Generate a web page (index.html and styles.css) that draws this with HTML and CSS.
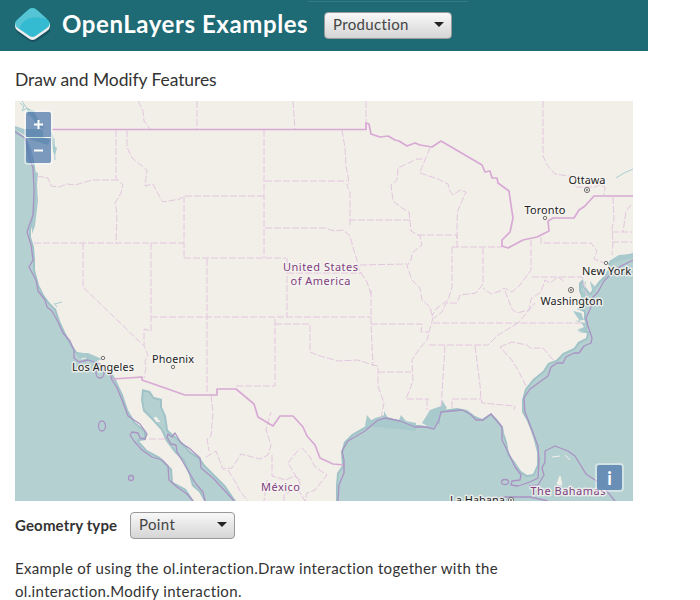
FILE: index.html
```html
<!DOCTYPE html>
<html lang="en">
<head>
<meta charset="utf-8">
<title>Draw and Modify Features</title>
<link rel="stylesheet" href="styles.css">
</head>
<body>
<header class="navbar">
  <svg class="logo" viewBox="0 0 36 38" width="36" height="38">
    <path d="M1 20Q0 24 3 26L13 33Q18 37 23 33L33 26Q36 24 35 20Z" fill="#17515d"/>
    <path d="M0 16V19Q0 22 3 24L13 31Q17.500 35 22 31L32 24Q35 22 35 19V16Z" fill="#eeeeee"/>
    <path d="M2 13L12 4Q17.500-2 23 4L33 13Q37 17 32 21L22 28Q17.500 32 13 28L3 21Q-2 17 2 13Z" fill="#34bbd1"/>
    <path d="M2 13L12 4Q17.500-2 23 4L32 12Q11 6 4 21L3 21Q-2 17 2 13Z" fill="#55c5d6"/>
  </svg>
  <span class="brand">OpenLayers Examples</span>
  <span class="picker picker-mode"><select><option>Production</option></select></span>
</header>
<main class="content">
  <h4 class="title">Draw and Modify Features</h4>
  <div class="map">
    <svg class="tiles" viewBox="15 101 618 400" width="618" height="400">
      <rect x="15" y="101" width="618" height="400" fill="#b5d0d0"/>
      <path class="land" d="M15 101H633V253L625 255 614 260 608 263 609 268 605 275 599 281 593 289 590 293 584 285 583 279 579 283 579 291 582 298 582 304 577 309 584 312 584 319 586 325 584 331 578 332 587 333 586 338 578 342 574 348 563 353 556 360 548 363 543 371 533 379 525 389 522 400 522 412 527 421 531 431 534 440 537 452 537 465 533 474 527 475 521 471 515 462 509 454 507 442 504 433 503 427 497 419 491 413 482 419 475 416 467 410 457 408 443 410 430 411 437 414 438 422 428 421 431 427 420 425 409 425 398 420 384 416 375 418 366 426 352 434 344 442 341 453 342 466 337 473 336 486 336 501H236L225 485 211 471 205 465 200 458 190 451 183 443 175 436 168 430 166 416 162 407 162 399 154 397 150 391 142 389 141 400 143 411 151 419 161 430 166 441 175 453 183 461 189 475 192 486 199 492 204 501H194L186 489 173 482 172 469 160 457 147 450 139 441 146 440 146 431 135 422 128 410 123 395 116 380 112 373 99 363 90 354 77 352 72 345 65 332 60 321 56 309 49 302 44 295 39 285 35 270 35 260 34 247 31 237 31 230 34 219 36 204 37 182 34 160 30 146 25 137 15 129Z"/>
      <g class="water">
        <path d="M33 129L43 130 43 137 50 140 48 145 32 140 15 129V126L24 129ZM51 131l2 5 1 10 3 2-2 7-2-3-1-8ZM28 108l6 4 8 14 4 3-7-2-11-14Z"/>
        <path d="M34 171l4 2-1 12 1 16-3 25-3 8v-9l3-16 1-25ZM586 281l-5 5 2 8 2-7ZM590 281l2 9 3 3 1-5ZM609 261l10-6 14-1v4l-23 5ZM583 307l-8-7 6 2 1-12 3-8 0 23ZM573 311l8 2 3 7-9 1 11 2-1 10-8-3 7-3M422 423l8-13 11-4 1-6 5 8-7 7-2 9-7 4ZM365 426l2-11 4 5 13-5v-4l4 7 11 2 2-5 5 6 10 2v8Z"/>
        <path d="M76 353l12 0 14 6-8 3-14-3Z"/>
      </g>
      <g class="rivers"><path d="M20 103l4 3-2 5 5-3 2 8 M22 101l6 9 7 1 M54 138l1 22 M55 304l7-2 M54 303l3 4 M616 178l8-5 9-4 M575 312l7 2"/></g>
      <g class="states">
        <path d="M138 101l5 10 1 10 7 9 M197 101v28 M293 101l2 28 M366 101v28 M543 101v55l4 9 8 9 20 3v10l20 0 4-2 6 2-1 8"/>
        <path d="M37 176l11 2 3 8 8 1 8-3 8 1 17-5 26 0 M116 130v48l7 7-2 8-6 10 2 10-1 30 M127 130v17l5 11 15 12-1 8-1 8 8-2 4 8 6 10 17-3 1-2 3 3 M185 196h80 M184 196v62 M34 243h150 M83 243v44l60 58 M151 243v88l-7-2 0 5 0 12 4 9-3 6 1 7-2 10 M184 258h102 M207 259v135 M264 130v128 M265 181h82 M342 130l3 18 1 18 3 16-2 4 3 6v35 M265 228h60l9 3 9-1 7 6 4 15 4 12 1 7 8 12 4 12 M287 258v59 M287 273h75 M151 317h220 M371 290v34l2 42 M275 319v67h-41 M275 324h35v28l10 4 18 5 20-1 15 5 5 1v20l6 17-3 15"/>
        <path d="M349 220H410L409 212 402 208 393 201 391 185 397 180 398 168 417 159 423 159 M430 148L420 172 M420 173L438 179 448 184 450 191 453 195 460 190 466 192 458 210 457 220 457 242 M410 220L411 231 420 236 422 245 412 253 411 260 407 266 412 280 420 288 422 300 430 307 433 318 431 325 427 340 420 348 412 360 413 381 406 399H429 M360 265L407 264 M418 235H457V247 M452 247H502 M452 247V287L448 300 437 308 432 316 M483 248V284L476 293 460 295 457 303 446 303 442 312 434 318 M433 323H518L535 303 M371 324H422L421 332H429 M429 345H488L498 335 518 323H585 M378 372H411 M445 346L441 408 M475 346L480 385 481 399 482 403 515 406 514 410 M452 408V399H481 M427 399V410 M526 386L518 370 511 359 500 347 M500 347L512 342 527 345 530 348H543L554 361"/>
        <path d="M531 240V270L520 285 512 292 504 288 500 291 491 294 483 288 M505 291L512 309 517 313 529 310 531 299 541 292 545 280 550 283 558 277 565 282 M541 237V243H591L597 251 594 259 607 264 M532 277H582L587 297 M613 197L614 219 612 228 613 243 612 255 M612 232H632 M612 242H632 M631 205L626 211 623 232"/>
        <path d="M211 395l2 18-2 23-4 3 2 12 M206 457l10-6 3 8 4 10 9-1 9-14 19 5 8-4 3-10-5-15 5-18 M272 455v21l14 4 8-4 8 5 M228 470l8 13 4 8 8 10 M267 480l-3 21 M284 501l0-6 12-7 M302 448l8 9 5 10 12 8-12 15-8 3-2 8-6-10 1-8-6-10-6-10 12-15 M149 439h17"/>
      </g>
      <path class="national" d="M52 129.500H366V123L369 124 371 134 380 137 388 136 395 140 399 141 407 146 415 143 420 145 432 147 441 141 482 165 485 172 490 171 492 178 497 178 498 183 509 191 511 205 513 218 510 232 502 240 502 246 508 248 523 240 537 237 549 231 548 221 553 218H574L579 210 585 206 594 196H633 M113 379L142 377V380L185 395H217V389H236L254 404 258 417 273 426 280 416H293L303 427 307 436 315 445 320 458 333 464 345 465"/>
      <path class="maritime" d="M15 132L25 138 30 160 33 168 34 190 33 215 29 226 27 232 31 245 33 260 29 267 36 280 38 291 45 300 47 307 52 311 58 322 63 333 70 341 74 350V358L79 362 88 360 100 364 110 373 112 380 117 388 122 400 128 416 140 424 147 434 145 439 140 438 138 433 132 432 130 435 134 441 142 450 152 457 162 460 168 466 169 480 177 487 187 494 193 501 M205 501L203 492 196 484 190 474 183 462 177 452 176 445 171 444 167 437 168 434 172 437 175 433 181 443 189 448 200 458 201 468 213 478 225 491 234 501 M338 501L339 485 344 473V460L342 451 348 441 365 431 378 420 385 418 400 421 415 427H427L434 429 439 420 441 412 462 410 470 414 476 420H483L491 414 502 427V440L509 454 515 467 521 475 520 480 512 481 511 485 518 486 530 482 538 478 539 460 538 446 532 430 525 412 524 398 530 389 548 376 551 367 557 363H563L566 357 574 353H579L584 346 591 343 592 338 588 326 586 318 591 307 593 297 598 292 604 281 612 273 621 266 633 260 M529 486L538 485 544 475 542 468 545 462V451L555 446 568 451 575 456 586 474 601 484 615 501 M485 500L506 497 530 497 548 501"/>
      <g class="islands"><ellipse cx="102" cy="426" rx="3.500" ry="5"/><circle cx="131" cy="478" r="2.500"/><ellipse cx="100" cy="373" rx="4" ry="5"/><ellipse cx="505" cy="482" rx="3.500" ry="2.500"/></g>
      <path class="cays" d="M81 359l5-1M157 422l-3-4 2-1 4 5M168 427l2-2M552 457l8-1M565 455l5 5M560 476l2 9-5-1ZM571 486l-4 3"/>
      <g class="marks"><circle cx="103" cy="358" r="1.700"/><circle cx="173" cy="367" r="1.700"/><circle cx="545" cy="218" r="1.700"/><circle cx="606" cy="263" r="1.700"/><circle cx="587" cy="190" r="2.600"/><circle cx="587" cy="190" r=".7"/><circle cx="571" cy="290" r="2.600"/><circle cx="571" cy="290" r=".7"/><circle cx="511" cy="500" r="2.600"/><circle cx="511" cy="500" r=".7"/></g>
      <g class="city">
        <text x="587" y="184" textLength="37">Ottawa</text><text x="545" y="214" textLength="41">Toronto</text><text x="606.500" y="275" textLength="49">New York</text><text x="571.500" y="305" textLength="62">Washington</text><text x="103" y="371" textLength="62">Los Angeles</text><text x="173" y="363" textLength="42">Phoenix</text><text x="477.500" y="504" textLength="55">La Habana</text>
      </g>
      <g class="country"><text x="320.500" y="271" textLength="75">United States</text><text x="320.500" y="285" textLength="60">of America</text><text x="280.500" y="491" textLength="39">México</text><text x="568" y="495" textLength="75">The Bahamas</text></g>
    </svg>
    <div class="zoom">
      <button class="control control-in"><svg width="11" height="11" viewBox="0 0 11 11"><path d="M5.500 1v9M1 5.500h9"/></svg></button>
      <button class="control control-out"><svg width="11" height="11" viewBox="0 0 11 11"><path d="M1 5.500h9"/></svg></button>
    </div>
    <div class="attribution"><button class="control control-info">i</button></div>
  </div>
  <form class="form"><label class="label">Geometry type</label><span class="picker picker-type"><select><option>Point</option></select></span></form>
  <p class="description">Example of using the ol.interaction.Draw interaction together with the<br>ol.interaction.Modify interaction.</p>
</main>
</body>
</html>
```
FILE: styles.css
```css
* { box-sizing: border-box; }
body { margin: 0; height: 600px; overflow: hidden; background: #fff; color: #333; font-family: Lato, "Open Sans", sans-serif; font-size: 15px; }
.navbar { width: 648px; height: 51px; padding: 7px 0 0 15px; display: flex; align-items: flex-start; background: linear-gradient(#347b85, #347b85) 308px 1px / 160px 1px no-repeat #1f6b75; }
.logo { flex: none; }
.brand { width: 262px; margin-left: 11px; color: #fff; font-size: 24px; font-weight: 700; line-height: 34px; letter-spacing: .58px; white-space: nowrap; }
.picker { display: inline-block; position: relative; height: 27px; }
.picker::after { content: ""; position: absolute; right: 8px; top: 10px; border: 5px solid transparent; border-top-color: #222; border-bottom: 0; }
.picker select { display: block; width: 100%; height: 27px; padding: 0 8px 3px; appearance: none; border: 1px solid #999; border-radius: 4px; background: linear-gradient(#f8f8f8, #d5d5d5); color: #444; font: 15px Lato, sans-serif; letter-spacing: .35px; }
.picker-mode { width: 128px; margin-top: 5px; }
.picker-type { width: 105px; }
.content { padding: 0 15px; }
.title { margin: 0; padding-top: 16px; height: 50px; font-size: 17.500px; font-weight: 400; line-height: 26px; letter-spacing: -.08px; }
.map { position: relative; width: 618px; height: 400px; overflow: hidden; }
.tiles { display: block; }
.land { fill: #f2efe9; stroke: #a0c3c8; stroke-width: 4; stroke-linejoin: round; paint-order: stroke; }
.water { fill: #a9cacc; }
.rivers { fill: none; stroke: #a9cfd0; stroke-width: 1; }
.states { fill: none; stroke: #e3c6df; stroke-width: 1; stroke-dasharray: 7 2; }
.national { fill: none; stroke: #d8a9d4; stroke-width: 1.700; stroke-linejoin: round; }
.maritime, .islands { fill: none; stroke: #a992c4; stroke-width: 1.300; stroke-linejoin: round; }
.cays { fill: #f2efe9; stroke: #f2efe9; }
.marks { fill: #f2efe9; stroke: #555; stroke-width: .8; }
.city, .country { font-family: "Noto Sans", sans-serif; font-size: 11px; text-anchor: middle; paint-order: stroke; stroke: #f7f5f1; stroke-opacity: .75; stroke-width: 3px; stroke-linejoin: round; }
.city { fill: #222; }
.country { fill: #804080; }
.zoom, .attribution { position: absolute; padding: 2px; border-radius: 4px; background: rgba(255, 255, 255, .4); }
.zoom { left: 9px; top: 9px; width: 29px; }
.attribution { right: 9px; bottom: 9px; }
.control { display: flex; align-items: center; justify-content: center; width: 25px; height: 25px; margin: 0; padding: 0; border: 0; color: #fff; background: rgba(0, 60, 136, .5); }
.control path { fill: none; stroke: #fff; stroke-width: 2; }
.control-in { margin-bottom: 1px; border-radius: 2px 2px 0 0; }
.control-out { border-radius: 0 0 2px 2px; }
.control-info { border-radius: 2px; background: #6a8fb6; font: 700 18px Lato, sans-serif; }
.form { display: flex; align-items: center; margin: 0; padding-top: 11px; }
.label { width: 115px; padding-bottom: 2px; font-weight: 700; letter-spacing: .15px; }
.description { margin: 18px 0 0; font-size: 15px; line-height: 23px; letter-spacing: .34px; white-space: nowrap; }
```
